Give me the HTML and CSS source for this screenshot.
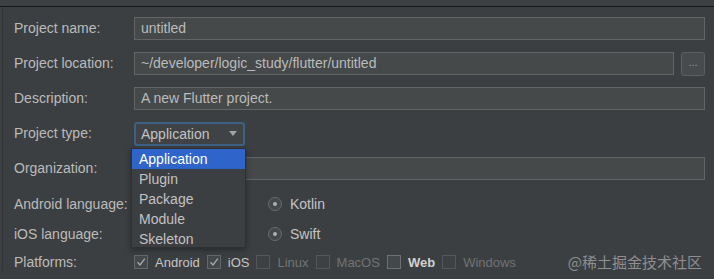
FILE: index.html
```html
<!DOCTYPE html>
<html>
<head>
<meta charset="utf-8">
<link rel="stylesheet" href="styles.css">
</head>
<body>
<div class="window">
  <div class="topbar"></div>
  <div class="form">
    <div class="row">
      <label class="label">Project name:</label>
      <div class="field wide">untitled</div>
    </div>
    <div class="row">
      <label class="label">Project location:</label>
      <div class="field loc">~/developer/logic_study/flutter/untitled</div>
      <div class="browse">...</div>
    </div>
    <div class="row">
      <label class="label">Description:</label>
      <div class="field wide">A new Flutter project.</div>
    </div>
    <div class="row">
      <label class="label">Project type:</label>
      <div class="combo"><span>Application</span><span class="arrow"></span></div>
    </div>
    <div class="row">
      <label class="label">Organization:</label>
      <div class="field wide"></div>
    </div>
    <div class="row radio-row first">
      <label class="label">Android language:</label>
      <div class="options"><span class="radio"><span class="dot"></span></span><span class="opt">Kotlin</span></div>
    </div>
    <div class="row radio-row second">
      <label class="label">iOS language:</label>
      <div class="options"><span class="radio"><span class="dot"></span></span><span class="opt">Swift</span></div>
    </div>
    <div class="row radio-row">
      <label class="label">Platforms:</label>
      <div class="checks">
        <span class="check on"><span class="box"><svg viewBox="0 0 14 14" width="14" height="14"><path d="M3.5 7.2 L6 10 L10.8 3.6" fill="none" stroke="#a9a9a9" stroke-width="1.3"/></svg></span><span class="ct">Android</span></span>
        <span class="check on"><span class="box"><svg viewBox="0 0 14 14" width="14" height="14"><path d="M3.5 7.2 L6 10 L10.8 3.6" fill="none" stroke="#a9a9a9" stroke-width="1.3"/></svg></span><span class="ct">iOS</span></span>
        <span class="check dis"><span class="box"></span><span class="ct">Linux</span></span>
        <span class="check dis"><span class="box"></span><span class="ct">MacOS</span></span>
        <span class="check web"><span class="box"></span><span class="ct">Web</span></span>
        <span class="check dis"><span class="box"></span><span class="ct">Windows</span></span>
      </div>
    </div>
  </div>
  <div class="popup">
    <div class="item sel">Application</div>
    <div class="item">Plugin</div>
    <div class="item">Package</div>
    <div class="item">Module</div>
    <div class="item">Skeleton</div>
  </div>
  <div class="watermark">@稀土掘金技术社区</div>
</div>
</body>
</html>
```
FILE: styles.css
```css
html, body {
  margin: 0;
  padding: 0;
  background: #3c3f41;
}
body {
  font-family: "Liberation Sans", Arial, sans-serif;
  font-size: 14px;
  color: #bbbbbb;
}
.window {
  position: relative;
  width: 714px;
  height: 279px;
  overflow: hidden;
  background: #3c3f41;
}
.topbar {
  height: 6px;
  background: #3d4042;
  border-bottom: 1px solid #161616;
}
.form {
  padding: 10px 9px 0 11px;
  border-left: 1px solid #333537;
  margin-left: 2px;
}
.row {
  display: flex;
  align-items: center;
  height: 23px;
  margin-bottom: 12px;
}
.label {
  width: 120px;
  flex: none;
  line-height: 23px;
}
.field {
  height: 21px;
  line-height: 21px;
  background: #45494a;
  border: 1px solid #646464;
  padding: 0 6px;
  box-sizing: content-box;
  color: #bbbbbb;
}
.wide {
  flex: 1;
}
.loc {
  flex: 1;
}
.browse {
  width: 22px;
  height: 22px;
  margin-left: 7px;
  border: 1px solid #5e6060;
  border-radius: 3px;
  background: #474b4d;
  color: #9a9a9a;
  font-size: 11px;
  line-height: 18px;
  text-align: center;
}
.combo {
  width: 102px;
  height: 20px;
  border: 2px solid #3d6185;
  border-radius: 3px;
  background: #3f4345;
  display: flex;
  align-items: center;
  justify-content: space-between;
  padding: 0 0 0 5px;
  box-sizing: content-box;
}
.combo span:first-child {
  color: #c4c4c4;
}
.arrow {
  width: 0;
  height: 0;
  border-left: 4.5px solid transparent;
  border-right: 4.5px solid transparent;
  border-top: 5px solid #a3a3a3;
  margin-right: 6px;
}
.radio-row {
  height: 18px;
  margin-bottom: 12px;
}
.radio-row.first {
  margin-top: 15px;
}
.radio-row.second {
  margin-bottom: 10px;
}
.options {
  display: flex;
  align-items: center;
  padding-left: 134px;
}
.radio {
  width: 14px;
  height: 14px;
  border: 1px solid #6b6b6b;
  border-radius: 50%;
  background: #43484a;
  display: flex;
  align-items: center;
  justify-content: center;
  box-sizing: border-box;
}
.dot {
  width: 4px;
  height: 4px;
  border-radius: 50%;
  background: #b0b0b0;
}
.opt {
  margin-left: 8px;
  color: #c4c4c4;
}
.checks {
  display: flex;
  align-items: center;
  gap: 7px;
  font-size: 13px;
}
.check {
  display: flex;
  align-items: center;
  gap: 7px;
}
.box {
  width: 14px;
  height: 14px;
  border: 1px solid #666868;
  background: #43484a;
  box-sizing: border-box;
  display: flex;
  align-items: center;
  justify-content: center;
  overflow: hidden;
}
.box svg {
  flex: none;
}
.check.on .ct {
  color: #c4c4c4;
}
.check.dis .ct {
  color: #717375;
}
.check.dis .box {
  border-color: #545658;
  background: #3e4143;
}
.check.web .ct {
  color: #d0d0d0;
  font-weight: bold;
}
.check.web .box {
  border-color: #6e7070;
}
.popup {
  position: absolute;
  left: 131px;
  top: 148px;
  width: 115px;
  height: 100px;
  background: #3c3f41;
  border: 1px solid #2e3032;
  box-sizing: border-box;
  box-shadow: 0 2px 6px rgba(0,0,0,0.35);
}
.item {
  height: 20px;
  line-height: 20px;
  padding-left: 7px;
  color: #c2c2c2;
}
.item.sel {
  background: #2f65ca;
  color: #ffffff;
}
.watermark {
  position: absolute;
  right: 12px;
  top: 253px;
  font-family: "Noto Sans CJK SC", sans-serif;
  font-size: 15px;
  color: #8d8f91;
  line-height: 18px;
}
```
